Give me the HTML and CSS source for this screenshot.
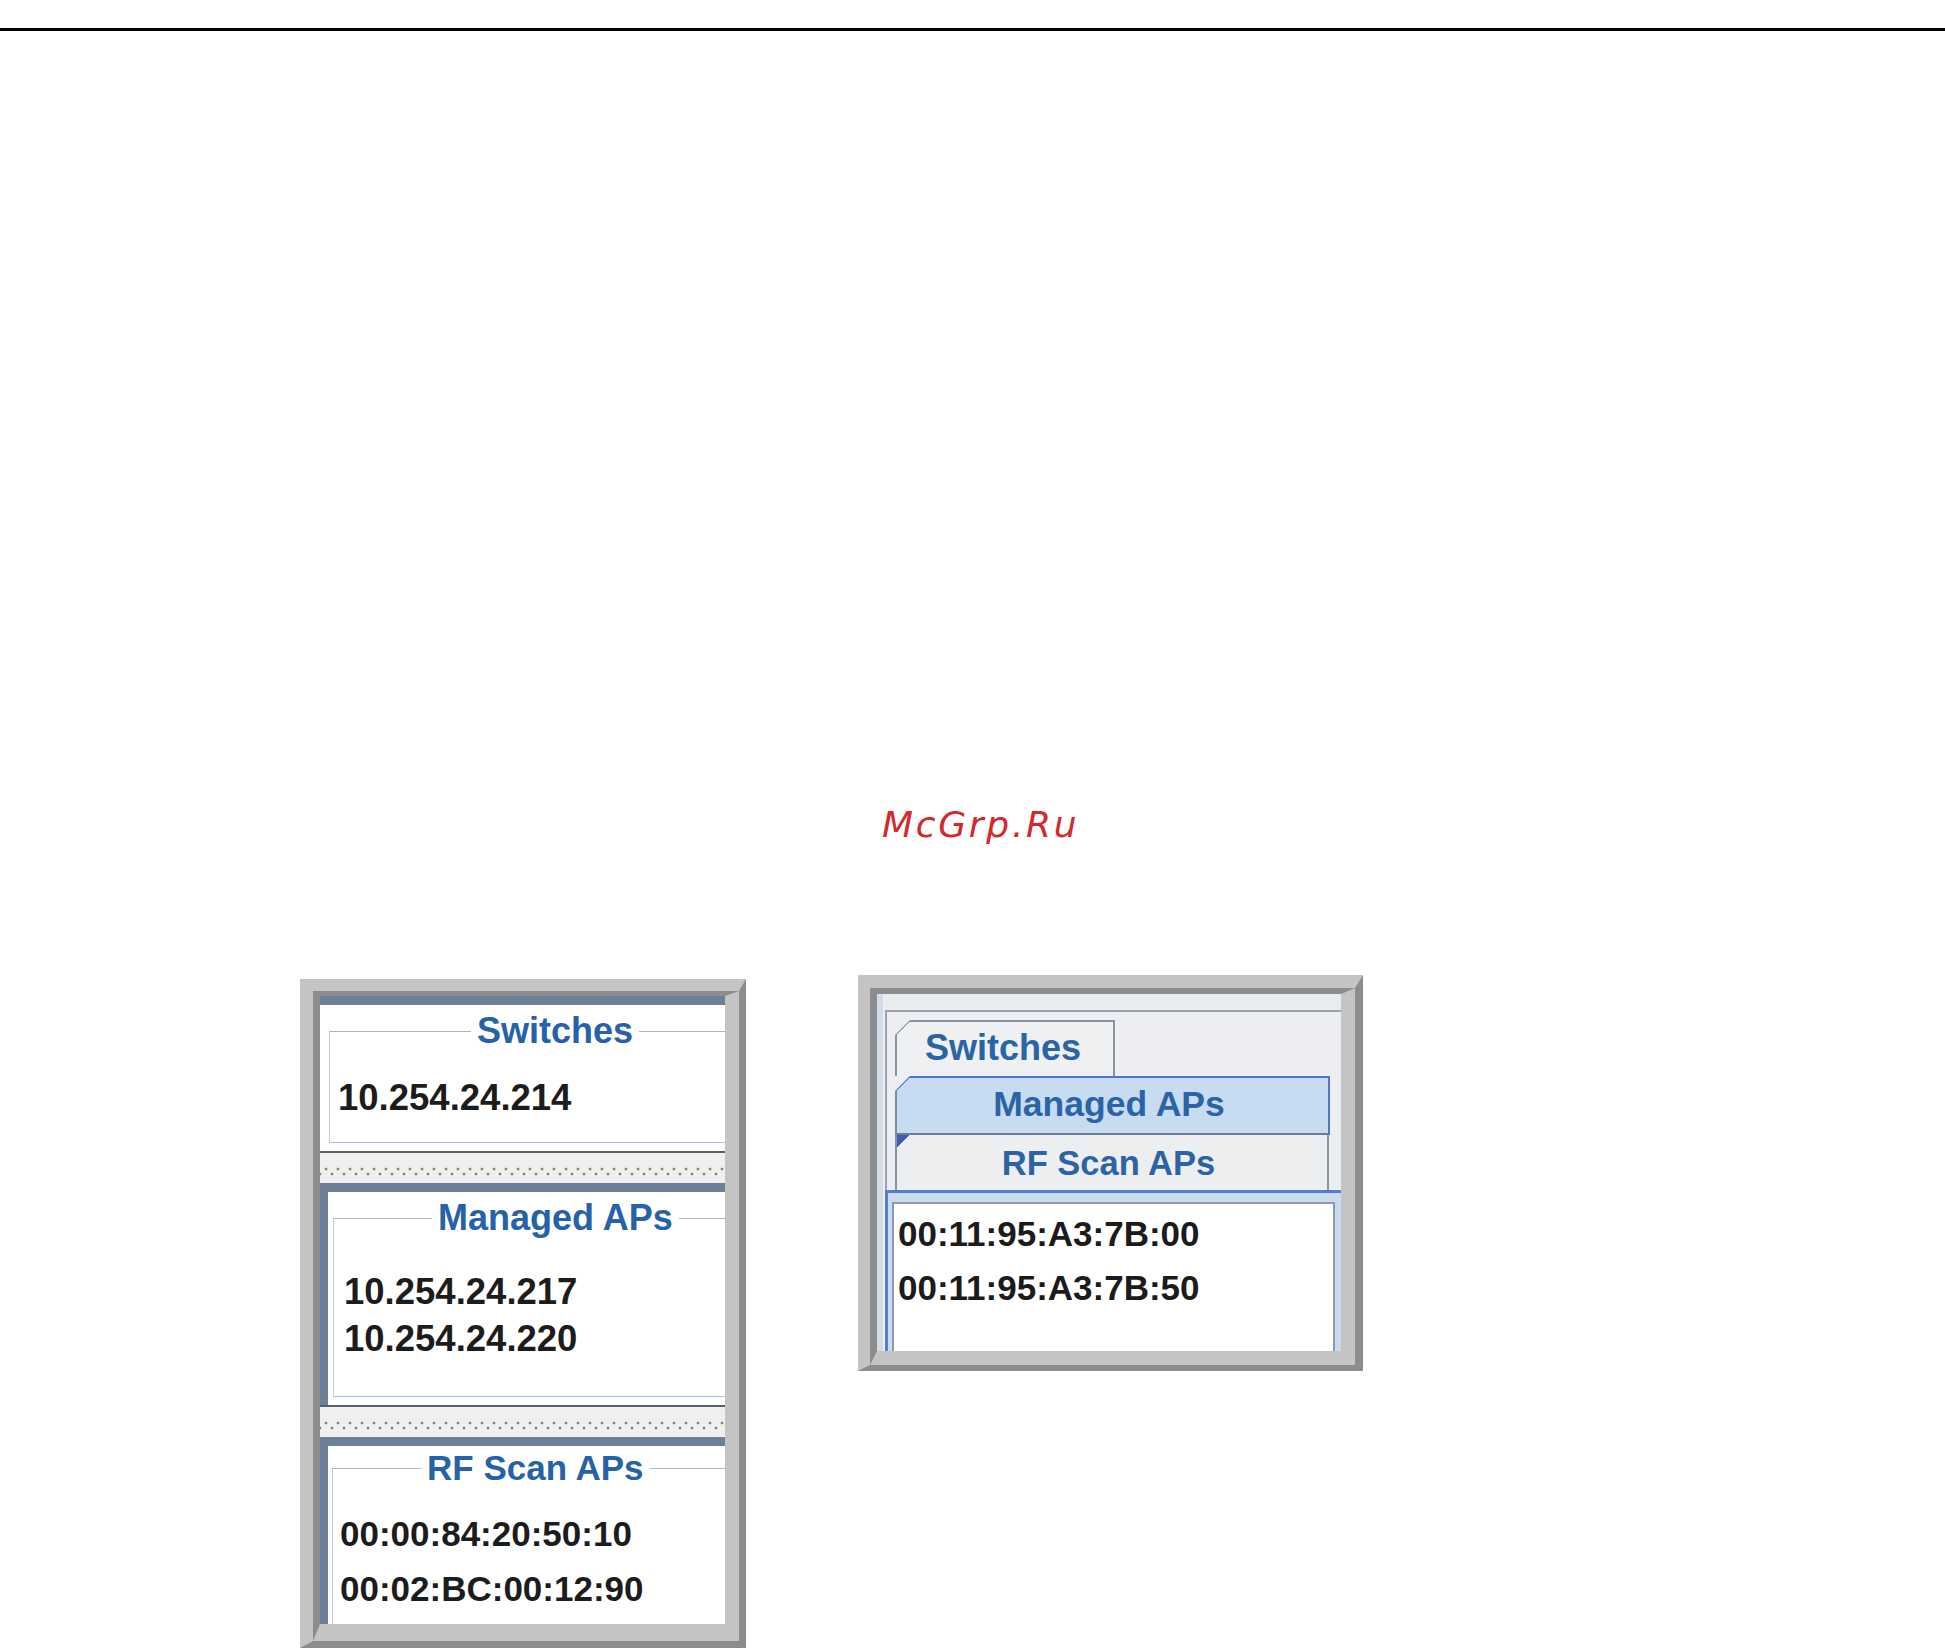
FILE: index.html
```html
<!DOCTYPE html>
<html lang="en">
<head>
<meta charset="utf-8">
<title>Switches / Managed APs / RF Scan APs</title>
<link rel="stylesheet" href="styles.css">
</head>
<body>
<div class="rule"></div>
<div class="watermark">McGrp.Ru</div>
<div class="figures">
  <div class="frame frame-split">
    <div class="frame-in frame-in-split">
      <div class="split">
        <section class="pane">
          <div class="pane-bar"></div>
          <div class="pane-body pane-body-1">
            <fieldset class="tb tb-1">
              <legend class="lg-switches">Switches</legend>
              <div class="rows rows-1">
                <div class="row">10.254.24.214</div>
              </div>
            </fieldset>
          </div>
          <div class="pane-end"></div>
        </section>
        <div class="divider"></div>
        <section class="pane">
          <div class="pane-bar"></div>
          <div class="pane-body strip pane-body-2">
            <fieldset class="tb tb-2">
              <legend class="lg-managed">Managed APs</legend>
              <div class="rows rows-2">
                <div class="row">10.254.24.217</div>
                <div class="row">10.254.24.220</div>
              </div>
            </fieldset>
          </div>
          <div class="pane-end"></div>
        </section>
        <div class="divider"></div>
        <section class="pane">
          <div class="pane-bar"></div>
          <div class="pane-body strip pane-body-3">
            <fieldset class="tb tb-3">
              <legend class="lg-rf">RF Scan APs</legend>
              <div class="rows rows-3">
                <div class="row">00:00:84:20:50:10</div>
                <div class="row">00:02:BC:00:12:90</div>
              </div>
            </fieldset>
          </div>
        </section>
      </div>
    </div>
  </div>

  <div class="frame frame-tabs">
    <div class="frame-in frame-in-tabs">
      <div class="tp">
        <div class="tp-head"></div>
        <div class="tp-body">
          <div class="tab tab-sw">Switches</div>
          <div class="tab tab-ma">Managed APs</div>
          <div class="tab tab-rf">RF Scan APs</div>
        </div>
        <div class="tp-content">
          <div class="tp-view">
            <div class="vrow">00:11:95:A3:7B:00</div>
            <div class="vrow">00:11:95:A3:7B:50</div>
          </div>
        </div>
      </div>
    </div>
  </div>
</div>
</body>
</html>
```
FILE: styles.css
```css
* { box-sizing: border-box; }
html, body { margin: 0; padding: 0; }
body {
  width: 1945px;
  height: 1649px;
  overflow: hidden;
  background: #ffffff;
  font-family: "Liberation Sans", Arial, sans-serif;
}

.rule {
  margin-top: 28px;
  height: 3px;
  background: #000000;
}

.watermark {
  margin-top: 772px;
  padding-left: 882px;
  font-family: "DejaVu Sans", sans-serif;
  font-style: oblique;
  font-size: 36px;
  line-height: 43px;
  letter-spacing: 2.7px;
  color: #d5282c;
}

.figures {
  display: flex;
  align-items: flex-start;
  padding-left: 300px;
  margin-top: 129px;
}

/* raised frames */
.frame {
  border-style: solid;
  border-color: #c4c4c4 #8c8c8c #8c8c8c #c4c4c4;
}
.frame-in {
  border-style: solid;
  border-color: #8c8c8c #c4c4c4 #c4c4c4 #8c8c8c;
}
.frame-split {
  margin-top: 4px;
  border-width: 12px 7px 7px 13px;
}
.frame-in-split {
  border-width: 5px 14px 17px 7px;
}
.frame-tabs {
  margin-left: 112px;
  border-width: 13px 8px 6px 12px;
}
.frame-in-tabs {
  border-width: 6px 14px 14px 7px;
}

/* split pane (left figure) */
.split {
  width: 405px;
  background: #ffffff;
}
.pane-bar {
  height: 9px;
  background: #6e8097;
}
.pane-body {
  background: #ffffff;
}
.pane-body.strip {
  border-left: 8px solid #6e8097;
}
.pane-body-1 { padding: 8px 0 8px 9px; }
.pane-body-2 { padding: 8px 0 8px 5px; }
.pane-body-3 { padding: 4px 0 0 4px; }
.pane-end {
  height: 2px;
  background: #55616c;
}
.divider {
  height: 30px;
  background-color: #efefef;
  background-image:
    radial-gradient(circle, #7e7e7e 1.1px, transparent 1.7px),
    radial-gradient(circle, #7e7e7e 1.1px, transparent 1.7px);
  background-size: 12px 30px, 12px 30px;
  background-position: 0 1px, 6px 6px;
  background-repeat: repeat-x;
}

/* titled borders */
.tb {
  margin: 0;
  padding: 0;
  min-width: 0;
  border: 0;
  border-top: 1px solid #a7b6c6;
  border-left: 1px solid #c3cae6;
  border-bottom: 1px solid #b2b8ef;
}
.tb-3 { border-bottom: 0; }
.tb legend {
  padding: 0 6px;
  font-size: 36px;
  line-height: 36px;
  font-weight: bold;
  color: #2662a8;
}
.tb legend.lg-switches { margin-left: 141px; }
.tb legend.lg-managed { margin-left: 98px; }
.tb legend.lg-rf { margin-left: 88px; font-size: 35px; }

.row {
  font-weight: bold;
  color: #1c1c1c;
  white-space: nowrap;
}
.rows-1 { padding: 27px 0 22px 8px; font-size: 36.5px; line-height: 44px; }
.rows-2 { padding: 32px 0 34px 10px; font-size: 36.5px; line-height: 47px; }
.rows-3 { padding: 20px 0 8px 7px; font-size: 35px; line-height: 55px; }

/* tabbed pane (right figure) */
.tp {
  width: 464px;
  height: 357px;
  background: #eceef1;
  border-left: 6px solid #d1dce6;
  padding-left: 2px;
  display: flex;
  flex-direction: column;
}
.tp-head {
  height: 18px;
  background: #e8ecef;
  border-bottom: 2px solid #98a3ae;
}
.tp-body {
  border-left: 2px solid #98a3ae;
  padding: 8px 0 0 8px;
}
.tab {
  font-weight: bold;
  color: #2a64a6;
  white-space: nowrap;
  clip-path: polygon(15px 0, 100% 0, 100% 100%, 0 100%, 0 15px);
}
.tab-sw {
  width: 220px;
  height: 56px;
  border: 2px solid #8594a4;
  border-bottom: 0;
  padding: 7.5px 0 0 28px;
  font-size: 36px;
  line-height: 36px;
  background:
    linear-gradient(135deg, transparent 10.6px, #8594a4 10.6px, #8594a4 12px, transparent 12px) border-box,
    #eef0f2;
}
.tab-ma {
  width: 435px;
  height: 59px;
  border-top: 2px solid #5370cf;
  border-right: 2px solid #5370cf;
  border-left: 2px solid #7b8ba0;
  border-bottom: 2px solid #6d7d96;
  padding: 7.5px 7px 0 0;
  font-size: 35.5px;
  line-height: 36px;
  text-align: center;
  background:
    linear-gradient(135deg, transparent 10.6px, #5370cf 10.6px, #5370cf 12px, transparent 12px) border-box,
    #c7dbf1;
}
.tab-rf {
  width: 434px;
  height: 55px;
  border-left: 2px solid #8594a4;
  border-right: 2px solid #8a96a2;
  padding: 9.5px 7px 0 0;
  font-size: 34.5px;
  line-height: 36px;
  text-align: center;
  clip-path: none;
  background:
    linear-gradient(to bottom right, #3d5db5 50%, transparent 50%) 2px 0 / 12px 13px no-repeat border-box,
    #eceef0;
}
.tp-content {
  flex: 1;
  display: flex;
  flex-direction: column;
  background: #c9dbf0;
  border-top: 3px solid #5a7bd2;
  border-left: 3px solid #5a7bd2;
  padding: 9px 0 0 4px;
}
.tp-view {
  flex: 1;
  background: #ffffff;
  border-top: 2px solid #8f9aa5;
  border-left: 2px solid #8f9aa5;
  border-right: 2px solid #8f9aa5;
  margin-right: 6px;
  padding: 3px 0 0 4px;
}
.vrow {
  font-size: 35px;
  line-height: 54px;
  font-weight: bold;
  color: #1b1b1b;
  white-space: nowrap;
}
```
